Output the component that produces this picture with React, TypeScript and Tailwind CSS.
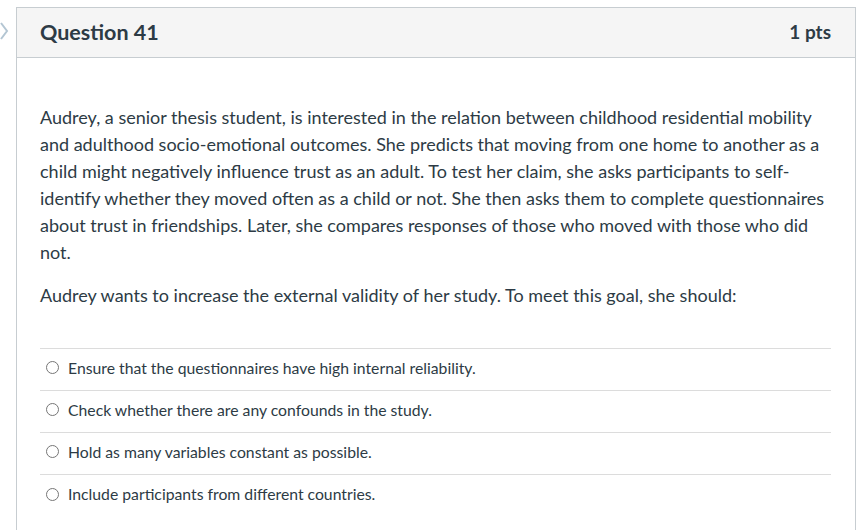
import React from 'react';

const answers = [
  'Ensure that the questionnaires have high internal reliability.',
  'Check whether there are any confounds in the study.',
  'Hold as many variables constant as possible.',
  'Include participants from different countries.',
];

export default function App() {
  return (
    <div className="relative h-[530px] w-[864px] overflow-hidden bg-white font-['Lato',sans-serif] text-[#2d3b45]">
      {/* collapsed nav chevron peeking in from the left */}
      <svg className="absolute left-0 top-[22px]" width="10" height="18" viewBox="0 0 10 18">
        <path d="M1 1 L7 9 L1 17" fill="none" stroke="#b4c6d3" strokeWidth="2" />
      </svg>

      <div className="ml-4 mt-[7px] w-[840px] border border-[#c7cdd1]">
        <div className="flex h-[50px] items-center justify-between border-b border-[#c7cdd1] bg-[#f5f5f5] pl-[23px] pr-6">
          <h2 className="text-[21.5px] font-bold">Question 41</h2>
          <span className="text-[19px] font-bold">1 pts</span>
        </div>

        <div className="pl-[23px] pr-6 pt-[46px]">
          <p className="text-[18px] leading-[27px]">
            Audrey, a senior thesis student, is interested in the relation between childhood residential mobility
            and adulthood socio-emotional outcomes. She predicts that moving from one home to another as a
            child might negatively influence trust as an adult. To test her claim, she asks participants to self-identify
            whether they moved often as a child or not. She then asks them to complete questionnaires
            about trust in friendships. Later, she compares responses of those who moved with those who did
            not.
          </p>
          <p className="mt-4 text-[18px] leading-[27px]">
            Audrey wants to increase the external validity of her study. To meet this goal, she should:
          </p>

          <div className="mt-[39px] border-t border-[#dcdcdc]">
            {answers.map((a) => (
              <div key={a} className="flex h-[42px] items-center gap-[9px] border-b border-[#dcdcdc] pb-1 pl-[6px] last:border-b-0">
                <span className="h-[13px] w-[13px] shrink-0 rounded-full border border-[#767676] bg-white" />
                <span className="text-[15.75px]">{a}</span>
              </div>
            ))}
          </div>
          <div className="h-10" />
        </div>
      </div>
    </div>
  );
}
